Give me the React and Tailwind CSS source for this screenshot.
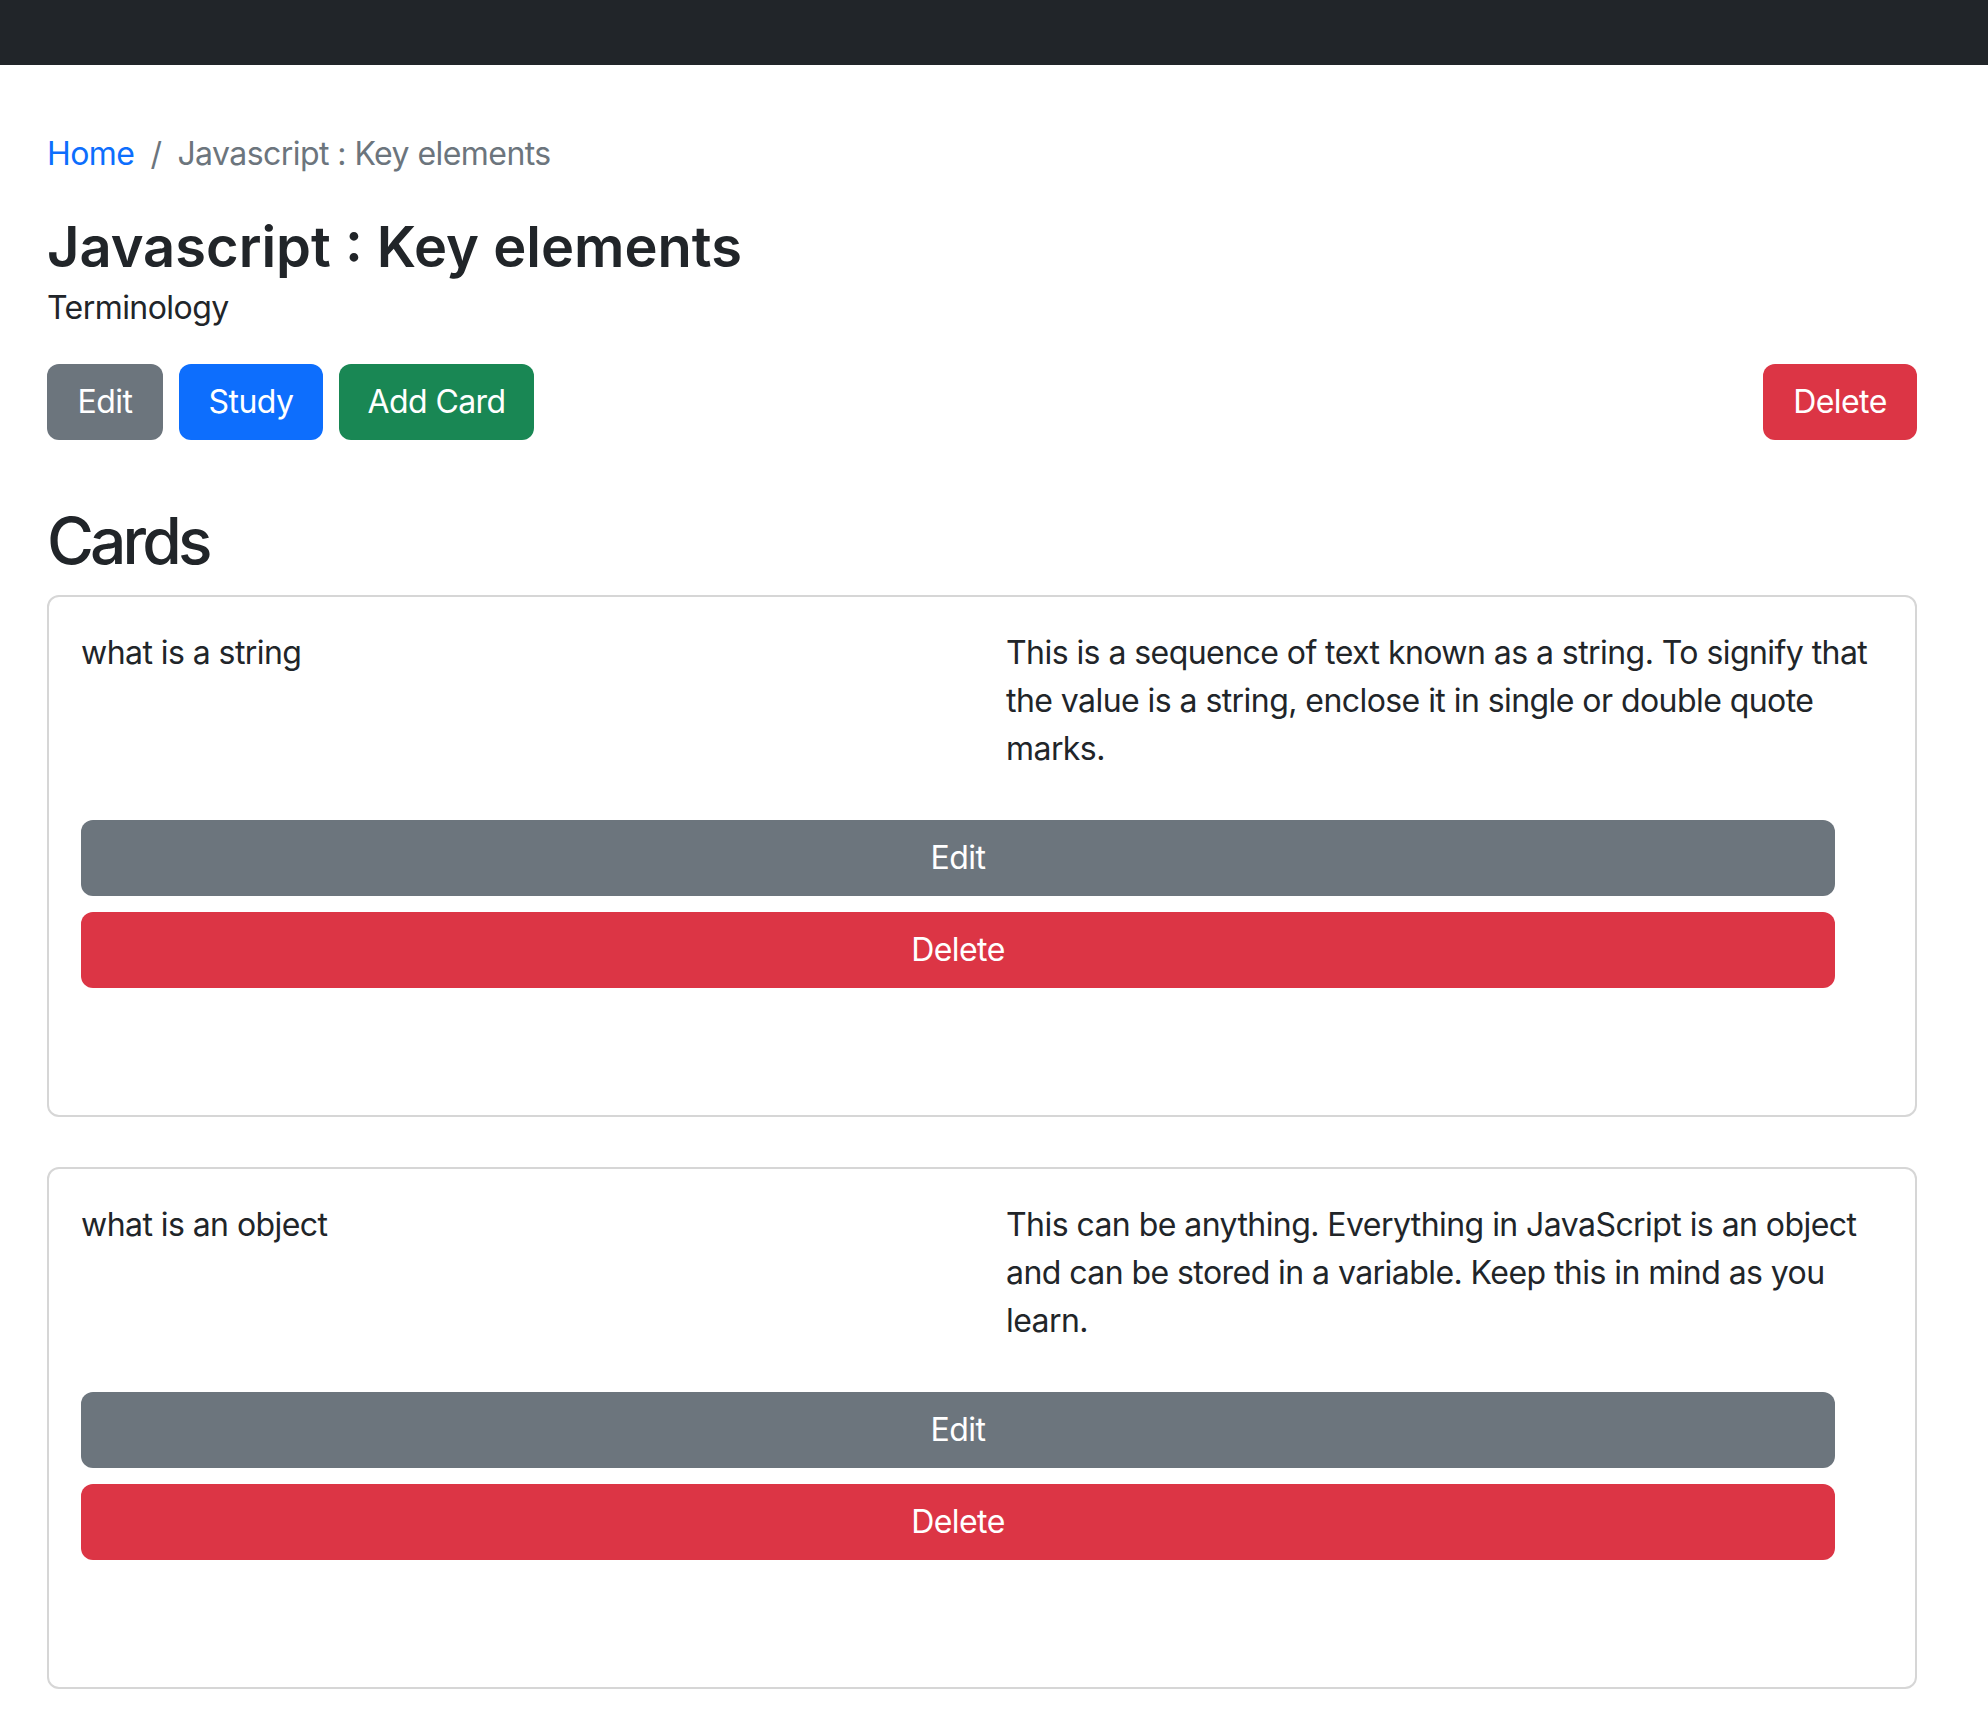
import React from "react";

const cards = [
  {
    front: "what is a string",
    back: "This is a sequence of text known as a string. To signify that the value is a string, enclose it in single or double quote marks.",
  },
  {
    front: "what is an object",
    back: "This can be anything. Everything in JavaScript is an object and can be stored in a variable. Keep this in mind as you learn.",
  },
];

const CardItem = ({ card }) => {
  return (
    <div className="border-2 border-[#d6d6d6] rounded-[12px] p-[32px] bg-white">
      <div className="grid grid-cols-2 gap-x-[48px]">
        <p className="text-[32px] leading-[48px]">{card.front}</p>
        <p className="text-[32px] leading-[48px]">{card.back}</p>
      </div>
      <div className="mt-[47px] mb-[95px] pr-[48px] flex flex-col gap-[16px]">
        <button className="h-[76px] w-full rounded-[12px] bg-[#6c757d] text-white text-[32px]">
          Edit
        </button>
        <button className="h-[76px] w-full rounded-[12px] bg-[#dc3545] text-white text-[32px]">
          Delete
        </button>
      </div>
    </div>
  );
};

const App = () => {
  return (
    <div
      className="min-h-screen bg-white text-[#212529] tracking-[-0.035em]"
      style={{ fontFamily: "Inter, 'Liberation Sans', sans-serif" }}
    >
      <nav className="h-[65px] bg-[#212529]"></nav>

      <div className="pl-[47px] pr-[71px] pb-[25px]">
        {/* breadcrumb */}
        <div className="mt-[65px] flex items-center text-[32px] leading-[48px]">
          <a href="#" className="text-[#0d6efd]">Home</a>
          <span className="px-[16px] text-[#6c757d]">/</span>
          <span className="text-[#6c757d]">Javascript : Key elements</span>
        </div>

        <h3 className="mt-[36px] text-[56px] leading-[67px] font-semibold tracking-[0em]">
          Javascript : Key elements
        </h3>
        <p className="mt-[3px] text-[32px] leading-[48px]">Terminology</p>

        <div className="mt-[32px] flex justify-between">
          <div className="flex gap-[16px]">
            <button className="h-[76px] w-[116px] rounded-[12px] bg-[#6c757d] text-white text-[32px]">
              Edit
            </button>
            <button className="h-[76px] w-[144px] rounded-[12px] bg-[#0d6efd] text-white text-[32px]">
              Study
            </button>
            <button className="h-[76px] w-[195px] rounded-[12px] bg-[#198754] text-white text-[32px]">
              Add Card
            </button>
          </div>
          <button className="h-[76px] w-[154px] rounded-[12px] bg-[#dc3545] text-white text-[32px]">
            Delete
          </button>
        </div>

        <h2 className="mt-[62px] text-[64px] leading-[77px] font-medium tracking-[-0.06em]">
          Cards
        </h2>

        <div className="mt-[16px] flex flex-col gap-[50px]">
          {cards.map((card, index) => (
            <CardItem key={index} card={card} />
          ))}
        </div>
      </div>
    </div>
  );
};

export default App;
